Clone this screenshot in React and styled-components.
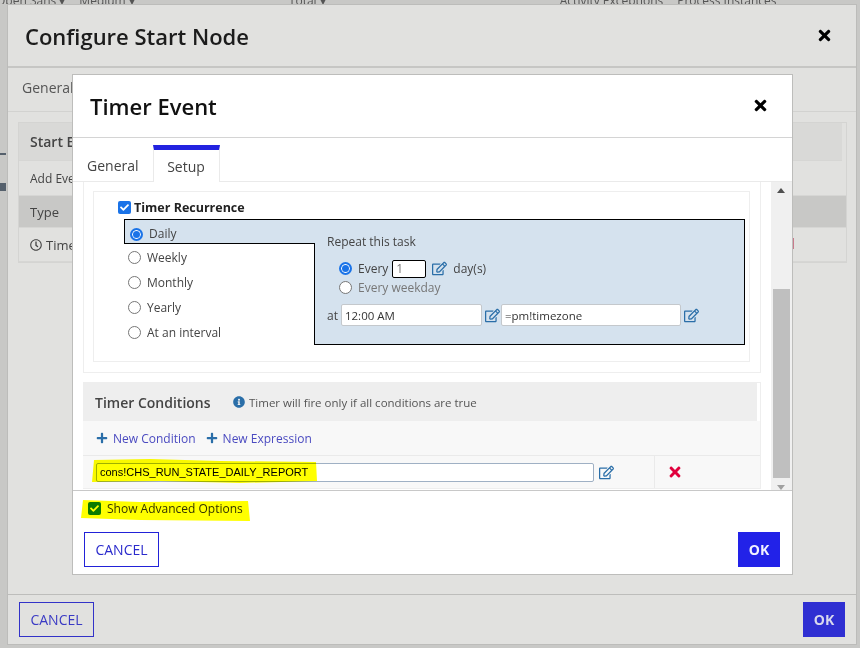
import React from "react";
import styled, { createGlobalStyle } from "styled-components";
import { FaTimes, FaRegEdit, FaPlus, FaInfoCircle, FaRegClock, FaCheck, FaCaretDown } from "react-icons/fa";

const Global = createGlobalStyle`
  html, body { margin: 0; padding: 0; background: #c8c8c6; }
  #root { height: 648px; overflow: hidden; }
  * { box-sizing: border-box; }
`;
const Page = styled.div`
  width: 860px; height: 648px; overflow: hidden; position: relative;
  font-family: "Open Sans", sans-serif; color: #333; background: #c8c8c6;
`;
const Toolbar = styled.div`
  height: 4px; overflow: hidden; display: flex; gap: 14px; align-items: flex-end;
  font-size: 12px; color: #555; white-space: nowrap; padding-left: 0;
`;
const ToolText = styled.span`
  display: block; height: 4px; line-height: 2px; margin-left: ${p => p.$ml || 0}px;
`;
const PageEdge = styled.span`
  position: absolute; left: 0; top: ${p => p.$top}px; width: 6px; height: ${p => p.$h}px; background: #55606c;
`;
const Dialog = styled.div`
  position: relative; margin-left: 7px; width: 850px; height: 641px; background: #e1e1df;
  border: 1px solid #bcbcba; display: flex; flex-direction: column;
`;
const DialogHeader = styled.div`
  height: 63px; flex: none; border-bottom: 2px solid #c6c6c4; display: flex; align-items: center;
  justify-content: space-between; padding: 0 23px 0 17px;
`;
const DialogTitle = styled.h1`
  margin: 0; font-size: 22px; font-weight: 600; color: #1c1c1c; line-height: 1; letter-spacing: 0;
`;
const CloseBtn = styled.span`
  display: flex; font-size: ${p => p.$size || 17}px; color: #000;
`;
const OuterTabs = styled.div`
  height: 44px; flex: none; border-bottom: 1px solid #d2d2d0; padding: 0 0 4px 14px;
  display: flex; align-items: center; font-size: 14px; color: #555;
`;
const OuterBody = styled.div`flex: 1; padding: 10px 9px 0 10px;`;
const OuterPanel = styled.div`
  height: 141px; border: 1px solid #d4d4d2; background: #e1e1df; display: flex; flex-direction: column;
`;
const OuterRow = styled.div`
  height: ${p => p.$h}px; flex: none; background: ${p => p.$bg}; display: flex; align-items: center; gap: 4px;
  padding-left: 11px; font-size: ${p => p.$size || 12}px; font-weight: ${p => p.$w || 400}; color: #444;
  border-bottom: 1px solid #d6d6d4; margin-right: ${p => p.$mr || 0}px;
`;
const RedBit = styled.span`
  position: absolute; left: 784px; top: 233px; width: 2px; height: 11px; background: #c87a8c;
`;
const DialogFooter = styled.div`
  height: 50px; flex: none; border-top: 1px solid #bdbdbb; padding: 7px 11px 0 11px;
  display: flex; justify-content: space-between; align-items: flex-start;
`;
const CancelBtn = styled.button`
  width: 75px; height: 35px; background: transparent; border: 1px solid ${p => p.$dim ? "#3232c8" : "#2222d8"};
  color: ${p => p.$dim ? "#3a3ac4" : "#2a2acc"}; font-family: inherit; font-size: 14px; padding: 0; font-weight: 400;
`;
const OkBtn = styled.button`
  width: 42px; height: 35px; border: 0; background: ${p => p.$dim ? "#2f2fd2" : "#2222e8"};
  color: ${p => p.$dim ? "#d8d8ee" : "#f2f2ff"}; font-family: inherit; font-size: 14px; font-weight: 700; padding: 0;
`;
const Modal = styled.div`
  position: absolute; left: 64px; top: 69px; width: 721px; height: 501px; background: #fff;
  border: 1px solid #bdbdbb; display: flex; flex-direction: column;
`;
const ModalHeader = styled.div`
  height: 63px; flex: none; border-bottom: 1px solid #d4d4d4; display: flex; align-items: center;
  justify-content: space-between; padding: 0 23px 1px 17px;
`;
const ModalTitle = styled.h2`
  margin: 0; font-size: 22px; font-weight: 600; color: #111; line-height: 1;
`;
const Tabs = styled.div`
  height: 44px; flex: none; border-bottom: 1px solid #eaeaea; display: flex; padding-left: 0;
`;
const Tab = styled.div`
  height: 44px; margin-top: 0; font-size: 14px; color: #444; display: flex; align-items: center;
  padding-top: 11px;
  ${p => p.$active
    ? `margin-left: 14px; width: 67px; justify-content: center; border-top: 5px solid #2222e0; border-left: 1px solid #eaeaea; border-right: 1px solid #eaeaea; background: #fff; height: 37px; margin-top: 7px; padding-top: 0;`
    : `padding-left: 14px;`}
`;
const ScrollArea = styled.div`flex: 1; min-height: 0; display: flex; overflow: hidden;`;
const ScrollContent = styled.div`flex: 1; padding: 0 10px; min-width: 0;`;
const Scrollbar = styled.div`
  width: 21px; flex: none; background: #f0f0f0; display: flex; flex-direction: column; align-items: center;
  position: relative; padding-left: 0;
`;
const Arrow = styled.span`
  position: absolute; left: 6px; ${p => p.$down ? "bottom: 0px;" : "top: 6px;"}
  width: 0; height: 0; border-left: 4.5px solid transparent; border-right: 4.5px solid transparent;
  ${p => p.$down ? "border-top: 5px solid #a0a0a0;" : "border-bottom: 5px solid #505050;"}
`;
const Thumb = styled.div`
  position: absolute; left: 2px; top: 107px; width: 17px; height: 189px; background: #bfbfbf;
`;
const OuterBox = styled.div`
  border: 1px solid #eeeeee; border-top: 0; padding: 9px 10px 10px 9px; height: 191px;
`;
const InnerBox = styled.div`
  border: 1px solid #eeeeee; height: 171px; padding: 8px 0 0 24px;
`;
const CheckRow = styled.label`
  display: flex; align-items: center; gap: 3px; height: 14px; font-size: 12.5px; font-weight: 700; color: #222;
`;
const CheckBox = styled.span`
  width: 13px; height: 13px; border-radius: 2px; background: ${p => p.$bg || "#1a73e8"}; color: #fff;
  display: flex; align-items: center; justify-content: center; font-size: 9px; flex: none;
`;
const Recurrence = styled.div`display: flex; margin: 5px 0 0 6px;`;
const OptionList = styled.div`width: 191px; flex: none; display: flex; flex-direction: column; position: relative; z-index: 1;`;
const Option = styled.div`
  display: flex; gap: 6px; font-size: 12px; color: #444; padding-left: ${p => p.$selected ? 5 : 4}px;
  height: ${p => p.$selected ? 25 : 25}px; align-items: flex-start;
  ${p => p.$selected
    ? `background: #d5e2ee; border: 1px solid #000; border-right: 0; padding-top: 5px; margin-right: 0; margin-bottom: 1px;`
    : `padding-top: 4px;`}
`;
const Radio = styled.span`
  width: 13px; height: 13px; border-radius: 50%; flex: none; background: #fff; margin-top: ${p => p.$mt ?? 2}px;
  border: ${p => p.$checked ? "2px solid #1a73e8" : "1px solid #777"};
  box-shadow: ${p => p.$checked ? "inset 0 0 0 1px #fff" : "none"};
  ${p => p.$checked ? "background: #1a73e8;" : ""}
`;
const Pane = styled.div`
  width: 431px; height: 126px; margin-left: -1px; background: #d5e2ee; border: 1px solid #000;
  padding: 13px 0 0 12px; display: flex; flex-direction: column; font-size: 12px; color: #444;
`;
const PaneLabel = styled.div`height: 17px; line-height: 17px;`;
const EveryRow = styled.div`
  display: flex; align-items: center; margin: ${p => p.$mt || 0}px 0 0 12px; height: ${p => p.$h || 19}px; gap: 6px;
  color: ${p => p.$muted ? "#777" : "#444"};
`;
const SmallInput = styled.input`
  width: 34px; height: 18px; border: 1px solid #000; border-radius: 2px; padding: 0 3px; margin-left: -2px;
  font: 12px "Open Sans", sans-serif; color: #777; background: #fff;
`;
const EditIcon = styled(FaRegEdit)`color: #2a6ea8; font-size: 15px; flex: none; margin-left: ${p => p.$ml || 0}px;`;
const AtRow = styled.div`display: flex; align-items: center; margin-top: 7px; height: 22px;`;
const AtInput = styled.input`
  width: ${p => p.$w}px; height: 22px; border: 1px solid #c4c8cc; border-radius: 2px; background: #fff; padding: 0 3px;
  font: 11.5px "Open Sans", sans-serif; color: #333; margin-left: ${p => p.$ml || 0}px;
`;
const Section = styled.div`margin-top: 9px; border: 1px solid #eeeeee; border-left: 0; width: 678px; height: 107px; `;
const SectionHead = styled.div`
  height: 38px; width: 674px; background: #eeeeee; display: flex; align-items: center; padding-left: 12px;
`;
const SectionTitle = styled.div`font-size: 14px; font-weight: 600; color: #444; width: 138px;`;
const InfoText = styled.div`display: flex; align-items: center; gap: 4px; font-size: 11.5px; color: #555;`;
const ActionRow = styled.div`
  height: 35px; background: #f8f8f8; border-bottom: 1px solid #eaeaea; display: flex; align-items: center;
  padding-left: 13px; gap: 10px; font-size: 12px;
`;
const ActionLink = styled.span`display: flex; align-items: center; gap: 5px; color: #4a4ac0;`;
const PlusIcon = styled(FaPlus)`color: #2a6ea8; font-size: 12px;`;
const CondRow = styled.div`
  height: 32px; background: #f8f8f8; display: flex; align-items: center; padding-left: 13px;
`;
const CondInput = styled.input`
  width: 498px; height: 19px; border: 1px solid #9fb0c4; border-radius: 2px; background: #fff; padding: 0 3px;
  font: 11px "Liberation Sans", sans-serif; color: #000;
`;
const DeleteCell = styled.div`
  margin-left: 40px; height: 32px; border-left: 1px solid #eaeaea; display: flex; align-items: center; padding-left: 12px;
  color: #e0003c; font-size: 16px;
`;
const ModalFooter = styled.div`
  height: 84px; flex: none; border-top: 1px solid #c8c8c8; padding: 10px 12px 0 11px; display: flex; flex-direction: column;
`;
const AdvRow = styled.label`
  display: flex; align-items: center; gap: 6px; height: 14px; margin-left: 4px; font-size: 12px; color: #333;
`;
const FooterButtons = styled.div`display: flex; justify-content: space-between; margin-top: 17px;`;
const Highlight = styled.svg`
  position: absolute; left: ${p => p.$l}px; top: ${p => p.$t}px; mix-blend-mode: multiply; pointer-events: none; z-index: 3;
`;

export default function App() {
  return (
    <Page>
      <Global />
      <Toolbar>
        <ToolText $ml={-4}>Open Sans ▾</ToolText>
        <ToolText>Medium ▾</ToolText>
        <ToolText $ml={140}>Total ▾</ToolText>
        <ToolText $ml={220}>Activity Exceptions</ToolText>
        <ToolText>Process Instances</ToolText>
      </Toolbar>
      <PageEdge $top={153} $h={2} />
      <PageEdge $top={183} $h={8} />
      <Dialog>
        <DialogHeader>
          <DialogTitle>Configure Start Node</DialogTitle>
          <CloseBtn><FaTimes /></CloseBtn>
        </DialogHeader>
        <OuterTabs>General</OuterTabs>
        <OuterBody>
          <OuterPanel>
            <OuterRow $h={38} $bg="#d9d9d7" $size={14} $w={600} $mr={4}>Start Events</OuterRow>
            <OuterRow $h={35} $bg="#e1e1df">Add Event</OuterRow>
            <OuterRow $h={32} $bg="#c8c8c6" $size={13}>Type</OuterRow>
            <OuterRow $h={34} $bg="#e1e1df" $size={13}><FaRegClock size={12} /> Timer</OuterRow>
          </OuterPanel>
          <RedBit />
        </OuterBody>
        <DialogFooter>
          <CancelBtn $dim>CANCEL</CancelBtn>
          <OkBtn $dim>OK</OkBtn>
        </DialogFooter>
        <Modal>
          <ModalHeader>
            <ModalTitle>Timer Event</ModalTitle>
            <CloseBtn><FaTimes /></CloseBtn>
          </ModalHeader>
          <Tabs>
            <Tab>General</Tab>
            <Tab $active>Setup</Tab>
          </Tabs>
          <ScrollArea>
            <ScrollContent>
              <OuterBox>
                <InnerBox>
                  <CheckRow><CheckBox><FaCheck /></CheckBox>Timer Recurrence</CheckRow>
                  <Recurrence>
                    <OptionList>
                      <Option $selected><Radio $checked $mt={3} />Daily</Option>
                      <Option><Radio />Weekly</Option>
                      <Option><Radio />Monthly</Option>
                      <Option><Radio />Yearly</Option>
                      <Option><Radio />At an interval</Option>
                    </OptionList>
                    <Pane>
                      <PaneLabel>Repeat this task</PaneLabel>
                      <EveryRow $mt={9}><Radio $checked $mt={0} />Every <SmallInput defaultValue="1" readOnly /><EditIcon />day(s)</EveryRow>
                      <EveryRow $muted><Radio $mt={0} />Every weekday</EveryRow>
                      <AtRow>at<AtInput $w={141} $ml={3} defaultValue="12:00 AM" readOnly /><EditIcon $ml={3} /><AtInput $w={180} $ml={1} defaultValue="=pm!timezone" readOnly /><EditIcon $ml={3} /></AtRow>
                    </Pane>
                  </Recurrence>
                </InnerBox>
              </OuterBox>
              <Section>
                <SectionHead>
                  <SectionTitle>Timer Conditions</SectionTitle>
                  <InfoText><FaInfoCircle color="#2a6ea8" size={12} />Timer will fire only if all conditions are true</InfoText>
                </SectionHead>
                <ActionRow>
                  <ActionLink><PlusIcon />New Condition</ActionLink>
                  <ActionLink><PlusIcon />New Expression</ActionLink>
                </ActionRow>
                <CondRow>
                  <CondInput defaultValue="cons!CHS_RUN_STATE_DAILY_REPORT" readOnly />
                  <EditIcon $ml={5} />
                  <DeleteCell><FaTimes /></DeleteCell>
                </CondRow>
              </Section>
            </ScrollContent>
            <Scrollbar>
              <Arrow />
              <Thumb />
              <Arrow $down />
            </Scrollbar>
          </ScrollArea>
          <ModalFooter>
            <AdvRow><CheckBox $bg="#0d7a0d"><FaCheck /></CheckBox>Show Advanced Options</AdvRow>
            <FooterButtons>
              <CancelBtn>CANCEL</CancelBtn>
              <OkBtn>OK</OkBtn>
            </FooterButtons>
          </ModalFooter>
          <Highlight $l={17} $t={384} width="228" height="25" viewBox="0 0 228 25">
            <path d="M4 1 L60 0 L130 2 L226 3 L227 22 L150 24 L70 22 L2 23 Z" fill="#ffff00" />
          </Highlight>
          <Highlight $l={7} $t={424} width="172" height="24" viewBox="0 0 172 24">
            <path d="M3 1 L60 3 L168 2 L170 22 L60 21 L1 19 Z" fill="#ffff00" />
          </Highlight>
        </Modal>
      </Dialog>
    </Page>
  );
}
